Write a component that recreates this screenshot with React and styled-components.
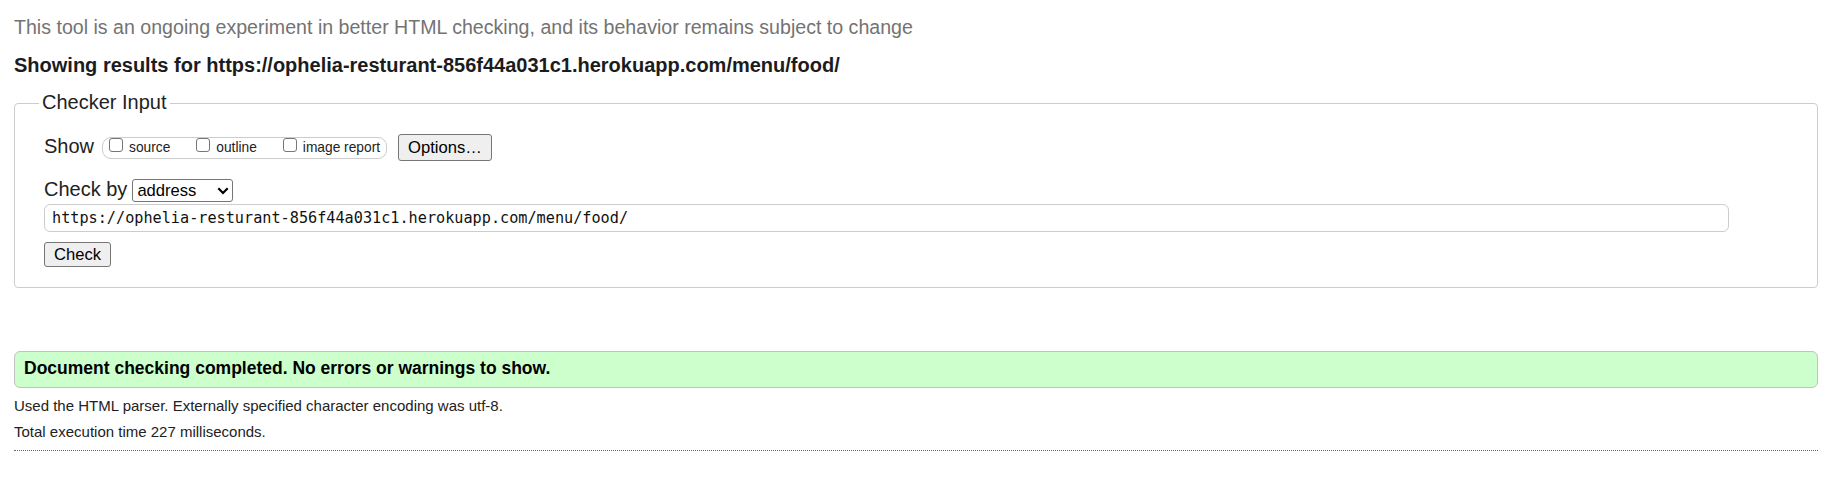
import React from "react";
import styled, { createGlobalStyle } from "styled-components";

const Global = createGlobalStyle`
  html, body { margin: 0; padding: 0; background: #fff; }
  body { font-family: "Liberation Sans", Arial, sans-serif; color: #222; }
`;

const Page = styled.div`
  padding: 15px 17px 0 14px;
`;

const Intro = styled.p`
  margin: 0;
  font-size: 19.6px;
  line-height: 24px;
  color: #737373;
`;

const Heading = styled.h2`
  margin: 14px 0 0;
  font-size: 20px;
  line-height: 24px;
  font-weight: bold;
  color: #1c1c1c;
`;

const Fieldset = styled.fieldset`
  margin: 14px 0 0;
  padding: 18px 29px 20px;
  border: 1px solid #cccccc;
  border-radius: 4px;
  min-width: 0;
`;

const Legend = styled.legend`
  margin-left: -5px;
  padding: 0 3px 3px;
  font-size: 20px;
  line-height: 22px;
  color: #222;
`;

const Row = styled.div`
  display: flex;
  align-items: center;
  height: ${(p) => p.$h}px;
  margin-top: ${(p) => p.$mt || 0}px;
`;

const RowLabel = styled.span`
  font-size: 20px;
  line-height: 23px;
  padding-bottom: 2px;
  margin-right: ${(p) => p.$mr}px;
  color: #222;
`;

const Group = styled.div`
  display: flex;
  gap: 26px;
  height: 20px;
  padding: 0 6px;
  border: 1px solid #cccccc;
  border-radius: 9px;
  margin-right: 11px;
`;

const Option = styled.label`
  display: flex;
  align-items: flex-start;
  font-size: 13.75px;
  line-height: 20px;
  color: #222;
`;

const Box = styled.input`
  appearance: none;
  -webkit-appearance: none;
  width: 14px;
  height: 14px;
  margin: 0 6px 0 0;
  border: 1px solid #767676;
  border-radius: 3px;
  background: #fff;
`;

const Button = styled.button`
  height: ${(p) => p.$h}px;
  padding: 0 ${(p) => p.$px}px;
  font-family: "Liberation Sans", Arial, sans-serif;
  font-size: 16.6px;
  color: #000;
  background: #efefef;
  border: 1px solid #767676;
  border-radius: 3px;
`;

const SelectWrap = styled.span`
  position: relative;
  display: inline-block;
`;

const Select = styled.select`
  appearance: none;
  -webkit-appearance: none;
  width: 101px;
  height: 23px;
  padding: 0 0 0 4px;
  font-family: "Liberation Sans", Arial, sans-serif;
  font-size: 16.6px;
  color: #000;
  background: #fff;
  border: 1px solid #767676;
  border-radius: 3px;
  display: block;
`;

const Chevron = styled.svg`
  position: absolute;
  right: 4px;
  top: 8px;
  pointer-events: none;
`;

const UrlInput = styled.input`
  display: block;
  box-sizing: border-box;
  width: calc(100% - 59px);
  height: 28px;
  margin: 2px 0 0;
  padding: 0 7px;
  font-family: "DejaVu Sans Mono", "Liberation Mono", monospace;
  font-size: 15.2px;
  color: #111;
  border: 1px solid #cccccc;
  border-radius: 6px;
  outline: none;
`;

const CheckRow = styled.div`
  margin-top: 10px;
  display: flex;
`;

const Success = styled.div`
  margin-top: 63px;
  padding: 7px 9px 9px;
  font-size: 17.5px;
  line-height: 19px;
  font-weight: bold;
  color: #000;
  background: #ccffcc;
  border: 1px solid #c2c2c2;
  border-radius: 6px;
`;

const Details = styled.div`
  margin-top: 5px;
  padding-bottom: 5px;
  border-bottom: 1px dotted #666;
`;

const Detail = styled.p`
  margin: 0;
  font-size: 15px;
  line-height: 26px;
  color: #222;
`;

export default function App() {
  const url = "https://ophelia-resturant-856f44a031c1.herokuapp.com/menu/food/";
  return (
    <>
      <Global />
      <Page>
        <Intro>
          This tool is an ongoing experiment in better HTML checking, and its behavior remains subject to change
        </Intro>
        <Heading>Showing results for {url}</Heading>
        <Fieldset>
          <Legend>Checker Input</Legend>
          <Row $h={27}>
            <RowLabel $mr={8}>Show</RowLabel>
            <Group>
              <Option><Box type="checkbox" />source</Option>
              <Option><Box type="checkbox" />outline</Option>
              <Option><Box type="checkbox" />image report</Option>
            </Group>
            <Button type="button" $h={27} $px={9}>Options…</Button>
          </Row>
          <Row $h={23} $mt={18}>
            <RowLabel $mr={5}>Check by</RowLabel>
            <SelectWrap>
              <Select defaultValue="address">
                <option value="address">address</option>
              </Select>
              <Chevron width="12" height="8" viewBox="0 0 12 8">
                <path d="M1.3 1.3 L6 6 L10.7 1.3" fill="none" stroke="#000" strokeWidth="2.2" />
              </Chevron>
            </SelectWrap>
          </Row>
          <UrlInput type="text" defaultValue={url} />
          <CheckRow>
            <Button type="button" $h={25} $px={9}>Check</Button>
          </CheckRow>
        </Fieldset>
        <Success>Document checking completed. No errors or warnings to show.</Success>
        <Details>
          <Detail>Used the HTML parser. Externally specified character encoding was utf-8.</Detail>
          <Detail>Total execution time 227 milliseconds.</Detail>
        </Details>
      </Page>
    </>
  );
}
